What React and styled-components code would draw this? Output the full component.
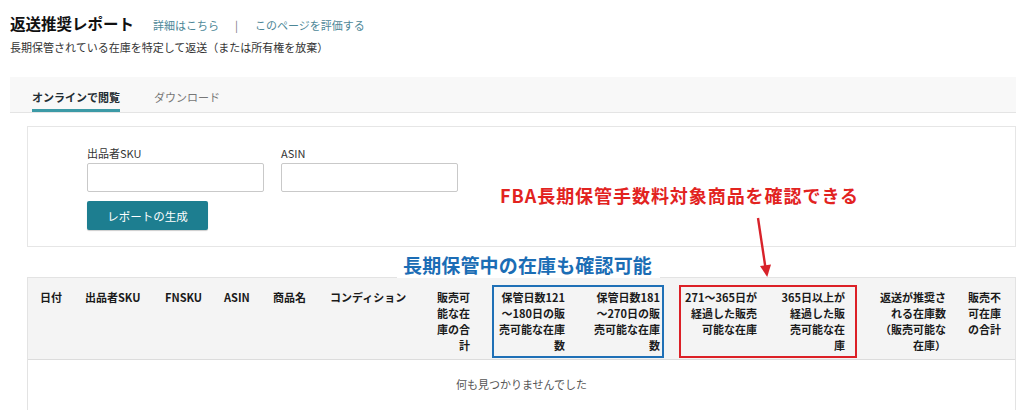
import React from "react";
import styled, { createGlobalStyle } from "styled-components";

const GlobalStyle = createGlobalStyle`
  body {
    margin: 0;
    background: #fff;
    font-family: "Noto Sans CJK JP", "Noto Sans", sans-serif;
    color: #111;
  }
`;

const columns = [
  { label: "日付", width: 45 },
  { label: "出品者SKU", width: 80 },
  { label: "FNSKU", width: 59 },
  { label: "ASIN", width: 49 },
  { label: "商品名", width: 57 },
  { label: "コンディション", width: 100 },
  { label: "販売可\n能な在\n庫の合\n計", width: 40, right: true },
];

const App = () => {
  return (
    <Page>
      <GlobalStyle />
      <TitleRow>
        <Title>返送推奨レポート</Title>
        <HeadLink>詳細はこちら</HeadLink>
        <Divider>|</Divider>
        <HeadLink>このページを評価する</HeadLink>
      </TitleRow>
      <Subtitle>長期保管されている在庫を特定して返送（または所有権を放棄）</Subtitle>

      <Tabs>
        <Tab className="active">オンラインで閲覧</Tab>
        <Tab>ダウンロード</Tab>
      </Tabs>

      <Content>
        <FilterPanel>
          <Fields>
            <Field>
              <Label>出品者SKU</Label>
              <Input />
            </Field>
            <Field>
              <Label>ASIN</Label>
              <Input />
            </Field>
          </Fields>
          <GenerateButton>レポートの生成</GenerateButton>
        </FilterPanel>

        <Table>
          <HeaderRow>
            {columns.map((col) => (
              <HeadCell key={col.label} $width={col.width} $right={col.right}>
                {col.label}
              </HeadCell>
            ))}
            <Highlight $color="#1f70b6" $ml={22} $pl={4} $pr={2}>
              <BoxCell $width={67}>{"保管日数121\n～180日の販\n売可能な在庫\n数"}</BoxCell>
              <BoxCell $width={67} $ml={28}>{"保管日数181\n～270日の販\n売可能な在庫\n数"}</BoxCell>
            </Highlight>
            <Highlight $color="#dc2026" $ml={15} $pl={0} $pr={10}>
              <BoxCell $width={76}>{"271～365日が\n経過した販売\n可能な在庫"}</BoxCell>
              <BoxCell $width={75} $ml={13}>{"365日以上が\n経過した販\n売可能な在\n庫"}</BoxCell>
            </Highlight>
            <HeadCell $width={70} $right $ml={19}>
              {"返送が推奨さ\nれる在庫数\n（販売可能な\n在庫）"}
            </HeadCell>
            <HeadCell $width={34} $right $ml={21}>
              {"販売不\n可在庫\nの合計"}
            </HeadCell>
          </HeaderRow>
          <EmptyRow>何も見つかりませんでした</EmptyRow>
        </Table>
      </Content>

      <RedNote>FBA長期保管手数料対象商品を確認できる</RedNote>
      <Arrow width="24" height="66" viewBox="0 0 24 66">
        <line x1="3" y1="4" x2="10.5" y2="54" stroke="#d8222a" strokeWidth="2.4" />
        <polygon points="5,52 16,50.5 12.2,63" fill="#d8222a" />
      </Arrow>
      <BlueNote>長期保管中の在庫も確認可能</BlueNote>
    </Page>
  );
};

const Page = styled.div`
  position: relative;
  width: 1024px;
  height: 410px;
  box-sizing: border-box;
  padding: 13px 8px 0 10px;
  overflow: hidden;
`;

const TitleRow = styled.div`
  display: flex;
  align-items: baseline;
  height: 20px;
`;

const Title = styled.h1`
  margin: 0 19px 0 0;
  font-size: 15.5px;
  line-height: 20px;
  font-weight: 700;
  color: #111;
`;

const HeadLink = styled.a`
  font-size: 11px;
  color: #4d8797;
  cursor: pointer;
`;

const Divider = styled.span`
  font-size: 11px;
  color: #777;
  margin: 0 17px 0 16px;
`;

const Subtitle = styled.p`
  margin: 6px 0 0;
  font-size: 11px;
  line-height: 16px;
  color: #333;
`;

const Tabs = styled.div`
  display: flex;
  gap: 34px;
  height: 36px;
  box-sizing: border-box;
  margin-top: 22px;
  padding-left: 22px;
  background: #f8f8f8;
  border-bottom: 1px solid #e4e4e4;
`;

const Tab = styled.div`
  padding: 12px 0 3px;
  font-size: 11px;
  line-height: 16px;
  color: #777;
  border-bottom: 3px solid transparent;
  cursor: pointer;

  &.active {
    color: #1f2d33;
    font-weight: 700;
    border-bottom-color: #3c9aa6;
  }
`;

const Content = styled.div`
  margin-left: 17px;
`;

const FilterPanel = styled.div`
  margin-top: 13px;
  height: 121px;
  box-sizing: border-box;
  border: 1px solid #e6e6e6;
  padding: 18px 0 0 59px;
`;

const Fields = styled.div`
  display: flex;
  gap: 17px;
`;

const Field = styled.div`
  display: flex;
  flex-direction: column;
  gap: 2px;
`;

const Label = styled.label`
  font-size: 11px;
  line-height: 16px;
  color: #333;
`;

const Input = styled.input`
  width: 177px;
  height: 29px;
  box-sizing: border-box;
  border: 1px solid #c9c9c9;
  border-radius: 2px;
  background: #fff;
`;

const GenerateButton = styled.button`
  margin-top: 9px;
  width: 121px;
  height: 29px;
  border: none;
  border-radius: 2px;
  background: #1d7e90;
  color: #fff;
  font-family: inherit;
  font-size: 11.5px;
  box-shadow: 0 1px 1px rgba(0, 0, 0, 0.2);
  cursor: pointer;
`;

const Table = styled.div`
  margin-top: 30px;
  border: 1px solid #e3e3e3;
  border-bottom: none;
  height: 140px;
`;

const HeaderRow = styled.div`
  display: flex;
  align-items: flex-start;
  padding: 7px 0 1px 12px;
  background: #f4f4f4;
  border-bottom: 1px solid #dcdcdc;
`;

const cellText = `
  font-size: 11px;
  line-height: 16px;
  font-weight: 700;
  color: #1a1a1a;
  white-space: pre-line;
`;

const HeadCell = styled.div`
  ${cellText}
  flex: none;
  box-sizing: border-box;
  width: ${(p) => p.$width}px;
  margin-left: ${(p) => p.$ml || 0}px;
  padding-top: 4px;
  text-align: ${(p) => (p.$right ? "right" : "left")};
`;

const Highlight = styled.div`
  display: flex;
  flex: none;
  height: 73px;
  box-sizing: border-box;
  margin-left: ${(p) => p.$ml}px;
  padding: 2px ${(p) => p.$pr}px 0 ${(p) => p.$pl}px;
  border: 2px solid ${(p) => p.$color};
`;

const BoxCell = styled.div`
  ${cellText}
  flex: none;
  width: ${(p) => p.$width}px;
  margin-left: ${(p) => p.$ml || 0}px;
  text-align: right;
`;

const EmptyRow = styled.div`
  padding-top: 16px;
  text-align: center;
  font-size: 11px;
  line-height: 16px;
  color: #555;
`;

const RedNote = styled.div`
  position: absolute;
  left: 500px;
  top: 183px;
  font-size: 18px;
  line-height: 24px;
  font-weight: 700;
  color: #e2231f;
  letter-spacing: 0.95px;
`;

const Arrow = styled.svg`
  position: absolute;
  left: 755px;
  top: 214px;
`;

const BlueNote = styled.div`
  position: absolute;
  left: 397px;
  top: 252px;
  padding: 0 8px 0 6px;
  background: #fff;
  font-size: 19px;
  line-height: 26px;
  font-weight: 700;
  color: #1b6db5;
  letter-spacing: 0.15px;
`;

export default App;
